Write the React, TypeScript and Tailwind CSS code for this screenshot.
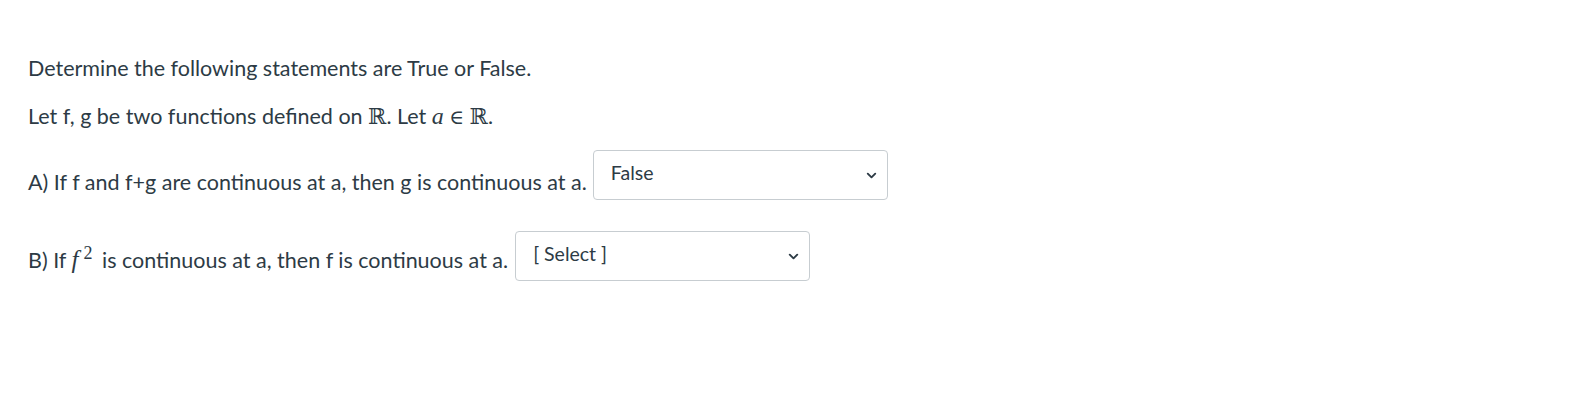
import { ChevronDown } from 'lucide-react'

function FakeSelect({ value, width }: { value: string; width: string }) {
  return (
    <div
      className={`flex items-center justify-between h-[50px] ${width} border border-[#c7cdd1] rounded-[4px] bg-white pl-[17px] pr-[8px] shrink-0`}
    >
      <span className="text-[19.5px] text-[#2d3b45] leading-none -mt-[4px]">{value}</span>
      <ChevronDown className="w-[15px] h-[15px] text-[#2d3b45]" strokeWidth={3} />
    </div>
  )
}

const math = 'font-["Liberation_Serif","DejaVu_Serif",serif]'

export default function App() {
  return (
    <div className="w-[1581px] h-[406px] bg-white text-[#2d3b45] font-['Lato',sans-serif] text-[21.5px] leading-[30px] pl-[28px] pt-[53px]">
      <p>Determine the following statements are True or False.</p>
      <p className="mt-[18px]">
        Let f, g be two functions defined on{' '}
        <span className={`${math} text-[22px]`}>ℝ</span>. Let{' '}
        <span className={`${math} italic text-[24px]`}>a</span>{' '}
        <span className={`${math} text-[20px]`}>∈</span>{' '}
        <span className={`${math} text-[22px]`}>ℝ</span>.
      </p>

      <div className="flex items-start gap-[6px] mt-[18px]">
        <span className="mt-[17px]">A) If f and f+g are continuous at a, then g is continuous at a.</span>
        <FakeSelect value="False" width="w-[295px]" />
      </div>

      <div className="flex items-start gap-[7px] mt-[31px]">
        <span className="mt-[14px]">
          B) If{' '}
          <span className={`${math} italic text-[25px]`}>
            f<sup className="not-italic text-[18px] ml-[5px] mr-[4px]">2</sup>
          </span>{' '}
          is continuous at a, then f is continuous at a.
        </span>
        <FakeSelect value="[ Select ]" width="w-[295px]" />
      </div>
    </div>
  )
}
